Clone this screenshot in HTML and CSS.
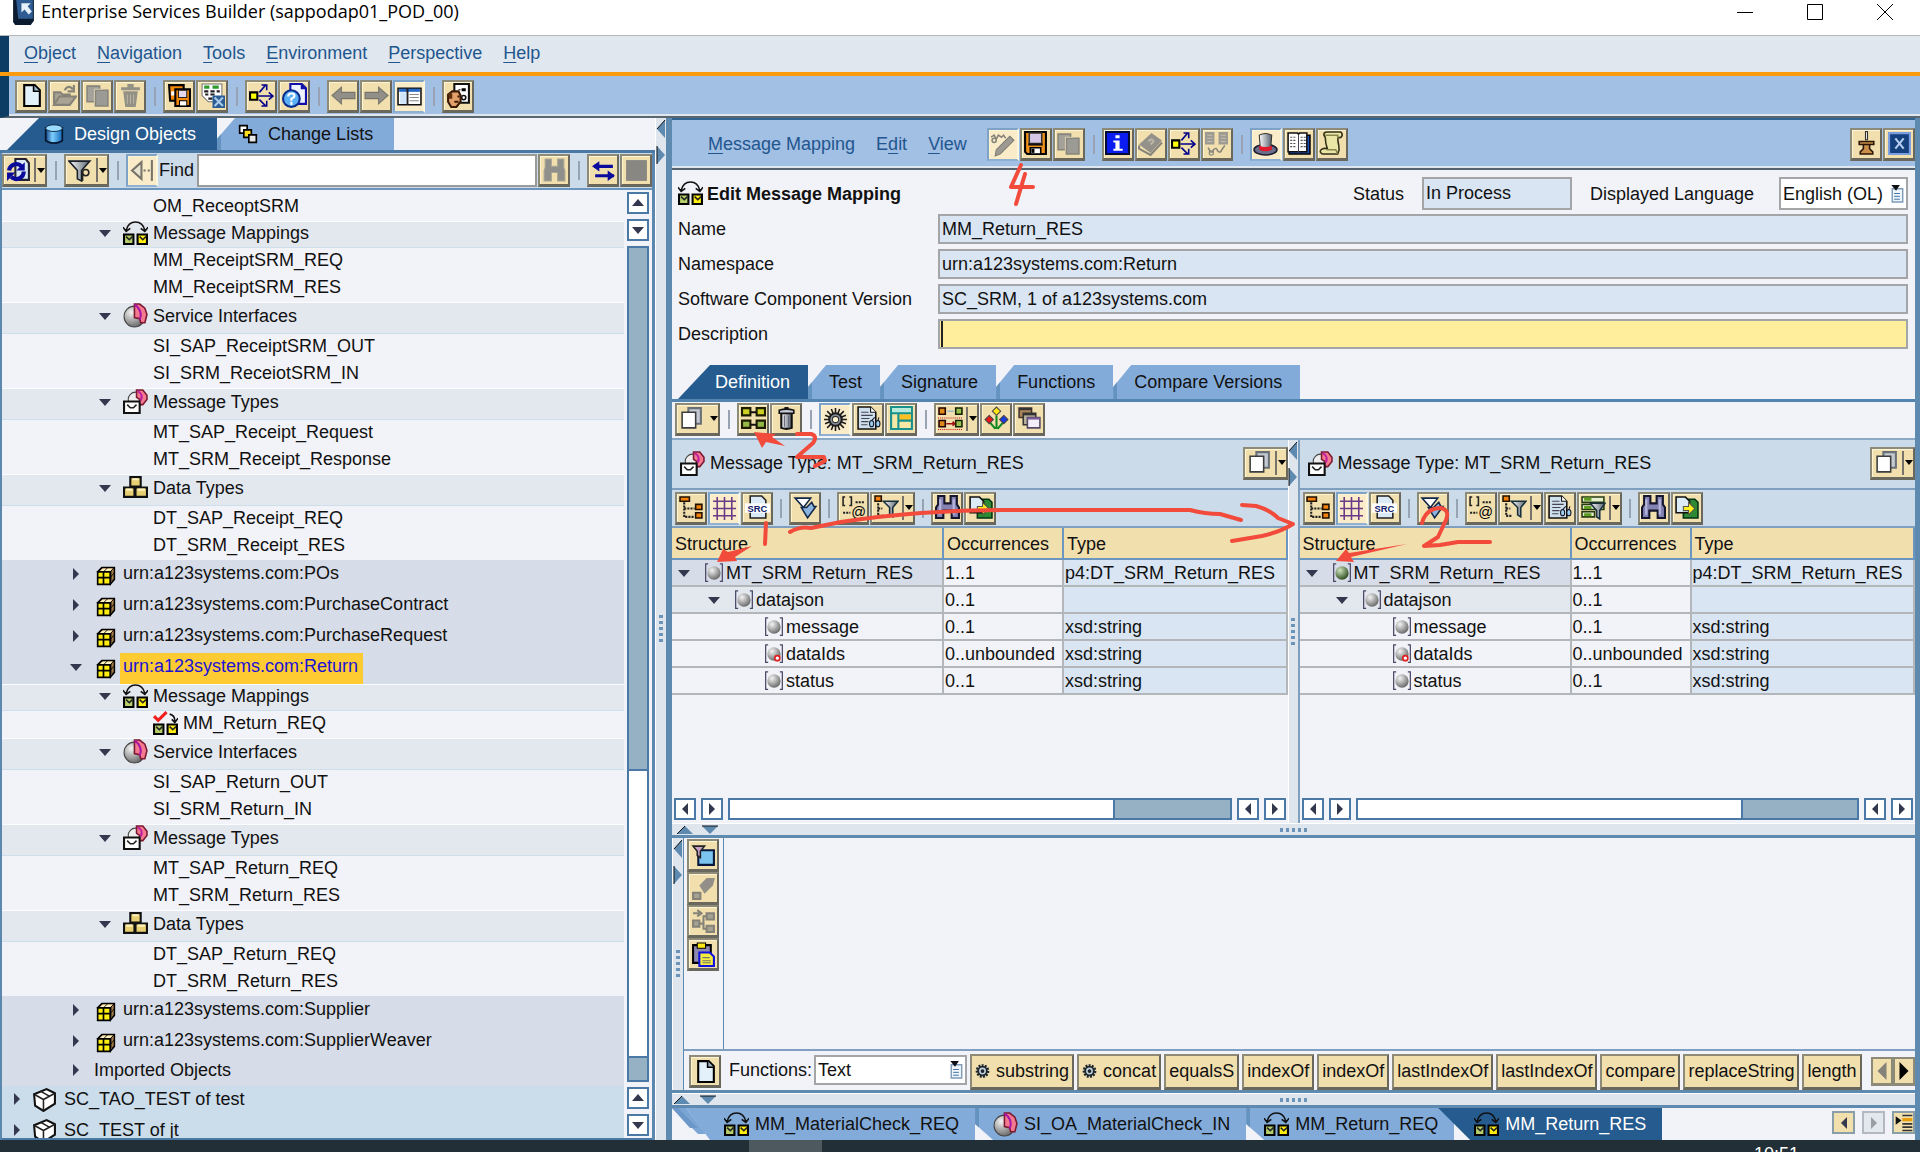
FILE: index.html
```html
<!DOCTYPE html>
<html lang="en">
<head>
    <meta charset="UTF-8">
    <meta name="viewport" content="width=device-width, initial-scale=1.0">
    <title>Enterprise Services Builder</title>
    <link rel="stylesheet" href="styles.css">
</head>
<body>
    <!-- Icon sprite -->
    <svg class="sprite" aria-hidden="true">
        <defs>
            <radialGradient id="ball" cx="35%" cy="30%" r="75%"><stop offset="0" stop-color="#f4f4f4"/><stop offset="1" stop-color="#666"/></radialGradient>
            <radialGradient id="ball-green" cx="35%" cy="30%" r="75%"><stop offset="0" stop-color="#cfe3bd"/><stop offset="1" stop-color="#2c4a1e"/></radialGradient>
            <linearGradient id="tube"><stop offset="0" stop-color="#123e86"/><stop offset=".4" stop-color="#7cd0ff"/><stop offset="1" stop-color="#1468b8"/></linearGradient>
            <linearGradient id="metal"><stop offset="0" stop-color="#fff"/><stop offset="1" stop-color="#55606c"/></linearGradient>
        </defs>
        <symbol id="i-app" viewBox="0 0 24 24"><path d="M2 0h20v20l-3 4H4l-2-3z" fill="#0c1c30"/><path d="M5 0h16v18H7z" fill="#2e5b91"/><path d="M10 3h9l-3 3 4 5-3 3-4-5-3 3z" fill="#e6f0fb"/></symbol>
        <symbol id="i-new" viewBox="0 0 24 24"><path d="M5 2h10l5 5v15H5z" fill="#e2f1fa" stroke="#000" stroke-width="2"/><path d="M14 2v6h6" fill="#9bb6c6" stroke="#000" stroke-width="1.5"/></symbol>
        <symbol id="i-open" viewBox="0 0 24 24"><path d="M2 21V9h6l2 2h7v3M2 21l5-8h16l-6 8z" fill="#a9a393" stroke="#858278" stroke-width="2"/><path d="M12 7q4-6 8-1M21 2v6h-6" fill="none" stroke="#858278" stroke-width="2"/></symbol>
        <symbol id="i-copy" viewBox="0 0 24 24"><path d="M2 3h12v15H2z" fill="#a3a19a" stroke="#86847b" stroke-width="1.5"/><path d="M10 7h12v15H10z" fill="#9c9a94" stroke="#86847b" stroke-width="1.5"/><path d="M9 19V6h8" fill="none" stroke="#d6cdb0"/></symbol>
        <symbol id="i-trash-off" viewBox="0 0 24 24"><path d="M3 4h18v3H3zM9 1h6v3H9zM5 8h14l-2 15H7z" fill="#939185"/><path d="M9 11v9M12 11v9M15 11v9" stroke="#b8b4a2"/></symbol>
        <symbol id="i-trash" viewBox="0 0 24 24"><path d="M7 7h10v14q-5 2-10 0z" fill="url(#metal)" stroke="#111" stroke-width="2"/><path d="M5 4q7-2 14 0v3H5z" fill="#c9cdda" stroke="#111" stroke-width="1.5"/><path d="M10 2h4" stroke="#111" stroke-width="2"/><path d="M10 9v11M14 9v11" stroke="#667" stroke-width="1"/></symbol>
        <symbol id="i-save" viewBox="0 0 24 24"><path d="M2 1h20v21H4l-2-2z" fill="#f0921a" stroke="#000" stroke-width="2"/><path d="M6 2h12v10H6z" fill="#d6c6e6" stroke="#333" stroke-width="1.5"/><path d="M5 12h14v2H5z" fill="#111"/><path d="M7 16h10v6H7z" fill="#fff" stroke="#000" stroke-width="1.5"/><path d="M8 17h3v4H8z"/></symbol>
        <symbol id="i-saveall" viewBox="0 0 24 24"><path d="M2 2h14v15H3z" fill="#f58a0a" stroke="#000" stroke-width="2"/><path d="M4 8h10v4H4z" fill="#fff"/><path d="M8 6h14v16H8z" fill="#f58a0a" stroke="#000" stroke-width="2"/><path d="M11 7h8v7h-8z" fill="#e6d6ee" stroke="#222"/><path d="M12 17h7v5h-7z" fill="#fff" stroke="#000"/></symbol>
        <symbol id="i-sheetx" viewBox="0 0 24 24"><path d="M2 1h19v17H8l-6-6z" fill="#fff" stroke="#777"/><path d="M4 4h5M12 4h6" stroke="#2c9c2c" stroke-width="3"/><path d="M4 8h4m2 0h4m2 0h3M5 11h3m2 0h4M8 15h4" stroke="#222" stroke-width="2"/><path d="M12 12h12v12H12z" fill="#2b5c94"/><path d="M14 14l8 8M22 14l-8 8" stroke="#a9cbe8" stroke-width="2"/></symbol>
        <symbol id="i-flow" viewBox="0 0 24 24"><path d="M1 9h7v7H1z" fill="#ff0" stroke="#000" stroke-width="2"/><path d="M9 12.500h13M19 9l4 3.500-4 3.500M10 9l6-7M12 2h5v5M10 16l6 6M12 22h5v-5" fill="none" stroke="#00008c" stroke-width="1.500"/></symbol>
        <symbol id="i-helpdoc" viewBox="0 0 24 24"><path d="M8 1h11l4 4v15H8z" fill="#eef3ff" stroke="#1111a8" stroke-width="2"/><path d="M18 1v5h5z" fill="#1111a8"/><circle cx="9" cy="15" r="8" fill="#5bb0f5" stroke="#0a2b8c" stroke-width="2"/><path d="M6 13q0-3 3-3t3 2q0 2-3 3v2M9 18v3" fill="none" stroke="#fff" stroke-width="2"/></symbol>
        <symbol id="i-back" viewBox="0 0 24 24"><path d="M1 12l9-8v5h13v6H10v5z" fill="#918f87" stroke="#76746c"/></symbol>
        <symbol id="i-fwd" viewBox="0 0 24 24"><path d="M23 12l-9-8v5H1v6h13v5z" fill="#918f87" stroke="#76746c"/></symbol>
        <symbol id="i-panel" viewBox="0 0 24 24"><path d="M1 4h22v16H1z" fill="#fff" stroke="#111" stroke-width="1.500"/><path d="M2 6h20" stroke="#2468c4" stroke-width="3"/><path d="M10 4v16" stroke="#222" stroke-width="2"/><path d="M3 8h6v11H3z" fill="#cfe6fa"/><path d="M12 10h9M12 13h9M12 16h9" stroke="#888"/></symbol>
        <symbol id="i-face" viewBox="0 0 24 24"><path d="M8 1h14v18H8z" fill="#fff" stroke="#111" stroke-width="2"/><path d="M15 5h4v3h-4zM12 6h2v1h-2z"/><circle cx="17" cy="14" r="2" fill="none" stroke="#111" stroke-width="1.500"/><path d="M2 11l4-3h6l2 4v6l-4 5H5l-3-5z" fill="#e2a06a" stroke="#3a1a06" stroke-width="2"/><path d="M2 10h4v5H3z" fill="#5c300f"/><path d="M11 13h2M8 18h4" stroke="#3a1a06" stroke-width="2"/></symbol>
        <symbol id="i-db" viewBox="0 0 24 24"><path d="M2 5v15q10 6 20 0V5z" fill="url(#tube)" stroke="#04162e" stroke-width="2"/><ellipse cx="12" cy="5" rx="10" ry="4" fill="#9adcff" stroke="#04162e"/></symbol>
        <symbol id="i-lists" viewBox="0 0 24 24"><path d="M2 2h9v9H2z" fill="#fff" stroke="#000" stroke-width="2"/><path d="M7 7h9v9H7z" fill="#ffdf20" stroke="#000" stroke-width="2"/><path d="M13 13h9v9h-9z" fill="#e7e7e7" stroke="#000" stroke-width="2"/></symbol>
        <symbol id="i-refresh" viewBox="0 0 24 24"><path d="M9 1h10l3 4v16H9z" fill="#dbe9f5" stroke="#223" stroke-width="2"/><path d="M3 12a7 7 0 0 1 12-4M17 13a7 7 0 0 1-12 5" fill="none" stroke="#0a0a9c" stroke-width="4"/><path d="M18 4v8h-8zM1 22v-8h8z" fill="#0a0a9c"/></symbol>
        <symbol id="i-filter" viewBox="0 0 24 24"><path d="M1 3h20l-8 9v10l-4-2v-8z" fill="url(#metal)" stroke="#18202c" stroke-width="1.500"/><circle cx="17" cy="14" r="3" fill="none" stroke="#222" stroke-width="1.500"/><path d="M14 14v8" stroke="#222" stroke-width="1.500"/></symbol>
        <symbol id="i-collapse" viewBox="0 0 24 24"><path d="M11 4v16L2 12z" fill="#e8e3d0" stroke="#77746a" stroke-width="2"/><path d="M21 2v20" stroke="#77746a" stroke-width="2"/><path d="M13 12h6" stroke="#77746a" stroke-width="2" stroke-dasharray="2 2"/></symbol>
        <symbol id="i-binoc-off" viewBox="0 0 24 24"><path d="M3 1h6v7h6V1h6v8l1 3v10h-7v-8H9v8H2V12l1-3z" fill="#8f8f8b" stroke="#aaa693"/></symbol>
        <symbol id="i-binoc" viewBox="0 0 24 24"><path d="M3 1h6v7h6V1h6v8l2 3v10h-7v-7H8v7H1V12l2-3z" fill="#8583b4" stroke="#15152c" stroke-width="2"/><path d="M5 4v15M18 4v15" stroke="#b6b6dc" stroke-width="2"/></symbol>
        <symbol id="i-swap" viewBox="0 0 24 24"><path d="M3 8h18M4 17h18" stroke="#0a0a9c" stroke-width="3"/><path d="M1 8l7-5v10zM23 17l-7-5v10z" fill="#0a0a9c"/></symbol>
        <symbol id="i-stop" viewBox="0 0 24 24"><path d="M2 2h20v20H2z" fill="#888782"/></symbol>
        <symbol id="i-map" viewBox="0 0 24 24"><path d="M3 9Q5 1 12 1t9 8M0 6l3 4 4-3M24 6l-3 4-4-3" fill="none" stroke="#111" stroke-width="1.5"/><path d="M1 13h9v9H1z" fill="#b6cf6a" stroke="#000" stroke-width="2"/><path d="M14 13h9v9h-9z" fill="#ffee10" stroke="#000" stroke-width="2"/><path d="M3 15l3 3 3-3M16 15l3 3 3-3" fill="none" stroke="#222" stroke-width="1.5"/></symbol>
        <symbol id="i-mapchk" viewBox="0 0 24 24"><path d="M16 3q5 1 5 7M24 7l-3 4-3-3" fill="none" stroke="#111" stroke-width="1.5"/><path d="M1 13h9v9H1z" fill="#b6cf6a" stroke="#000" stroke-width="2"/><path d="M14 13h9v9h-9z" fill="#ffee10" stroke="#000" stroke-width="2"/><path d="M3 15l3 3 3-3M16 15l3 3 3-3" fill="none" stroke="#222" stroke-width="1.5"/><path d="M1 5l4 4 8-8" fill="none" stroke="#f02020" stroke-width="3"/></symbol>
        <symbol id="i-iface" viewBox="0 0 24 24"><ellipse cx="11" cy="13" rx="10" ry="10" fill="url(#ball)" stroke="#444"/><path d="M11 1h5l5 4 2 6-2 8h-4l-1-4-5-1z" fill="#f47a90" stroke="#7c1830" stroke-width="1.5"/><path d="M11 2q3 1 5 5t0 9" fill="none" stroke="#a818a8" stroke-width="2"/></symbol>
        <symbol id="i-mtype" viewBox="0 0 24 24"><circle cx="12" cy="10" r="7" fill="#eee" stroke="#444"/><path d="M13 1h6l4 5v4l-4 5h-4l1-5-3-2z" fill="#f47a90" stroke="#7c1830" stroke-width="1.5"/><path d="M14 2q6 3 3 9" fill="none" stroke="#c020a0" stroke-width="2"/><path d="M1 12h15v11H1z" fill="#fff" stroke="#111" stroke-width="2"/><path d="M4 15l3 3h3l3-3" fill="none" stroke="#222" stroke-width="1.5"/></symbol>
        <symbol id="i-dtype" viewBox="0 0 24 24"><path d="M7 2h10v9H7zM1 12h10v9H1zM12 12h11v9H12z" fill="#e8cf72" stroke="#111" stroke-width="2"/><path d="M9 4h6M3 14h6M14 14h7" stroke="#fff3bd" stroke-width="2"/></symbol>
        <symbol id="i-ns" viewBox="0 0 24 24"><path d="M2 7l5-5h15v14l-5 6z" fill="#e0a860" stroke="#000" stroke-width="2"/><path d="M5 6l3-3h12l-3 3z" fill="#fff3c0"/><path d="M2 7h15v15H2z" fill="#ffed10" stroke="#000" stroke-width="2"/><path d="M2 14h15M9 7v15" stroke="#000" stroke-width="2"/><path d="M17 7l5-5M19 5v13M17 14l5-6M14 2L9 7" stroke="#000"/></symbol>
        <symbol id="i-sc" viewBox="0 0 24 24"><path d="M2 7l12-5 8 4v10l-11 7-8-5z" fill="#fff" stroke="#111" stroke-width="2"/><path d="M2 7l9 5v11M11 12l11-6M8 4l9 5" fill="none" stroke="#222" stroke-width="1.5"/></symbol>
        <symbol id="i-pencil" viewBox="0 0 24 24"><path d="M1 5l3-2 2 4 2-4 3 2 2-2 2 3" fill="none" stroke="#86847b" stroke-width="1.500"/><circle cx="4" cy="8" r="2" fill="none" stroke="#86847b" stroke-width="1.500"/><path d="M19 4l4 4-13 13-5 2 1-6z" fill="#9c9a92" stroke="#7c7a72"/></symbol>
        <symbol id="i-info" viewBox="0 0 24 24"><path d="M1 1h22v21H1z" fill="#0a1cf0" stroke="#000b38" stroke-width="2"/><path d="M10 4h4v3h-4zM8 9h6v8h3v2H8v-2h2v-6H8z" fill="#fff"/></symbol>
        <symbol id="i-book-off" viewBox="0 0 24 24"><path d="M1 13L13 2l10 7-11 12z" fill="#93918a"/><path d="M1 14v3l11 6 11-12" fill="none" stroke="#86847b" stroke-width="2"/><path d="M10 10q3-4 5 0l-3 3" fill="none" stroke="#b9b5a6" stroke-width="2"/></symbol>
        <symbol id="i-where-off" viewBox="0 0 24 24"><path d="M1 1h9v12H1zM14 1h9v12h-9z" fill="#9c9a92"/><path d="M3 4h5M3 7h5M3 10h5M16 4h5M16 7h5M16 10h5" stroke="#c4bfae"/><path d="M4 16l2 4q3 1 3-2 3-3 4 1 3 3 4-1l3-4" fill="none" stroke="#86847b" stroke-width="1.500"/><circle cx="7" cy="21" r="2" fill="none" stroke="#86847b"/></symbol>
        <symbol id="i-hat" viewBox="0 0 24 24"><ellipse cx="12" cy="17" rx="11" ry="5" fill="#6a6f8c" stroke="#1c1c2c" stroke-width="1.5"/><path d="M6 3q6-3 12 0l-1 12q-5 3-10 0z" fill="url(#metal)" stroke="#333"/><path d="M6 13q6 3 12 0v4q-6 3-12 0z" fill="#e01a2c"/></symbol>
        <symbol id="i-book" viewBox="0 0 24 24"><path d="M3 4h20v18H3z" fill="#1a4fb8" stroke="#000" stroke-width="1.500"/><path d="M2 2h9l1 1 1-1h7v18H2z" fill="#fff" stroke="#111" stroke-width="1.500"/><path d="M12 3v18" stroke="#445"/><path d="M4 6h6M4 9h6M4 12h6M4 15h6M14 6h5M14 9h5M14 12h5M14 15h5" stroke="#555" stroke-dasharray="2 1"/></symbol>
        <symbol id="i-scroll" viewBox="0 0 24 24"><path d="M5 2q1-1 3-1h13q2 2 1 4t-4 1q0 4 1 8t-1 8H3q-3-2-1-4t6-1Q6 11 6 6 4 4 5 2z" fill="#eae6a6" stroke="#333018" stroke-width="1.500"/><path d="M6 4h12v3M7 18h9q2 2 1 4" fill="none" stroke="#8a8650" stroke-width="1.5"/></symbol>
        <symbol id="i-pin" viewBox="0 0 24 24"><path d="M12 0v9" stroke="#333" stroke-width="3"/><path d="M12 1v7" stroke="#ddd"/><path d="M5 10h14v3H5zM9 13h6v4l3 3v2H6v-2l3-3z" fill="#c98f4a" stroke="#2a1606" stroke-width="1.5"/></symbol>
        <symbol id="i-x" viewBox="0 0 24 24"><path d="M2 2h20v20H2z" fill="#14407e" stroke="#7c9ce0" stroke-width="2"/><path d="M8 7l8 10M16 7L8 17" stroke="#b4cdee" stroke-width="2"/></symbol>
        <symbol id="i-windows" viewBox="0 0 24 24"><path d="M9 2h12v15H9z" fill="#c3cad2" stroke="#6a7078" stroke-width="2"/><path d="M3 6h13v15H3z" fill="#fff" stroke="#3c3c3c" stroke-width="1.5"/></symbol>
        <symbol id="i-depend" viewBox="0 0 24 24"><path d="M1 2h8v7H1zM15 2h8v7h-8z" fill="#cdcf24" stroke="#1c1c00" stroke-width="2"/><path d="M1 14h8v7H1zM15 14h8v7h-8z" fill="#96b848" stroke="#1c1c00" stroke-width="2"/><path d="M9 6h6M9 18h6" stroke="#111" stroke-width="2"/></symbol>
        <symbol id="i-gear" viewBox="0 0 24 24"><path d="M12 1v22M1 12h22M4 4l16 16M20 4L4 20M8 2l8 20M16 2L8 22M2 8l20 8M22 8L2 16" stroke="#1c1c1c" stroke-width="1.5"/><circle cx="12" cy="12" r="6" fill="#8a949e" stroke="#1c1c1c" stroke-width="2"/><circle cx="12" cy="12" r="3" fill="#fdf3d0" stroke="#333"/></symbol>
        <symbol id="i-cog" viewBox="0 0 24 24"><circle cx="12" cy="12" r="9" fill="none" stroke="#1c262e" stroke-width="4" stroke-dasharray="3 2"/><circle cx="12" cy="12" r="7" fill="#c4d2da" stroke="#1c262e" stroke-width="3"/><circle cx="12" cy="12" r="3" fill="#1c262e"/></symbol>
        <symbol id="i-docview" viewBox="0 0 24 24"><path d="M2 1h12l5 5v16H2z" fill="#cfe0ec" stroke="#111" stroke-width="1.500"/><path d="M14 1v5h5" fill="#fff" stroke="#111"/><path d="M5 6h7M5 9h11M5 12h8M5 15h7M5 18h6" stroke="#445"/><ellipse cx="15" cy="17" rx="2" ry="3" fill="#9cd0f0" stroke="#112"/><ellipse cx="21" cy="17" rx="2" ry="3" fill="#9cd0f0" stroke="#112"/><path d="M15 14l3-3M21 14l1-3" fill="none" stroke="#112"/></symbol>
        <symbol id="i-layout" viewBox="0 0 24 24"><path d="M2 1h20v21H2z" fill="#f6e9a6" stroke="#18908c" stroke-width="2"/><path d="M3 2h18v5H3z" fill="#b6ecdc"/><path d="M10 8h11v6H10z" fill="#ffc020"/><path d="M2 7h20M9 7v15M9 14h13" stroke="#18908c" stroke-width="2"/></symbol>
        <symbol id="i-maprows" viewBox="0 0 24 24"><path d="M1 2h6v6H1z" fill="#e08a18" stroke="#200" stroke-width="1.500"/><path d="M17 2h6v6h-6z" fill="#9cc050" stroke="#120" stroke-width="1.500"/><path d="M1 14h6v6H1z" fill="#e08a18" stroke="#200" stroke-width="1.500"/><path d="M17 14h6v6h-6z" fill="#9cc050" stroke="#120" stroke-width="1.500"/><path d="M9 5h6" stroke="#7aa4d8"/><path d="M8 17h8M14 15l2 2-2 2" fill="none" stroke="#a01010" stroke-width="1.500"/><path d="M0 11.500h24M0 22.500h24" stroke="#d01010" stroke-dasharray="1 1"/></symbol>
        <symbol id="i-diamonds" viewBox="0 0 24 24"><path d="M12 9v13M5 15l6 7M19 15l-6 7" fill="none" stroke="#108a20" stroke-width="2"/><path d="M12 1l4 4-4 4-4-4z" fill="#ffe810" stroke="#444"/><path d="M5 9l4 4-4 4-4-4z" fill="#e81818" stroke="#444"/><path d="M19 9l4 4-4 4-4-4z" fill="#1838e0" stroke="#444"/></symbol>
        <symbol id="i-cascade" viewBox="0 0 24 24"><path d="M2 2h12v9H2z" fill="#a98458" stroke="#433" stroke-width="1.500"/><path d="M2 3h12" stroke="#333" stroke-width="2"/><path d="M6 7h12v11H6z" fill="#b7b29c" stroke="#333" stroke-width="1.500"/><path d="M6 8h12" stroke="#333" stroke-width="2"/><path d="M10 11h12v10H10z" fill="#f4eef8" stroke="#554a66" stroke-width="1.500"/><path d="M10 12h12" stroke="#7a5a9a" stroke-width="2"/></symbol>
        <symbol id="i-tree" viewBox="0 0 24 24"><path d="M5 7v14h10M5 13h10" fill="none" stroke="#222" stroke-width="2" stroke-dasharray="2 1"/><path d="M1 2h9v4H1zM16 9h6v5h-6zM16 17h6v5h-6z" fill="#f5820a" stroke="#201000" stroke-width="1.500"/></symbol>
        <symbol id="i-grid" viewBox="0 0 24 24"><path d="M5 1v22M12 1v22M19 1v22M1 5h22M1 12h22M1 19h22" stroke="#6a3a86" stroke-width="1.5"/></symbol>
        <symbol id="i-expand" viewBox="0 0 24 24"><path d="M2 3h15l-7 9z" fill="#fff" stroke="#12284a" stroke-width="1.500"/><path d="M8 12h5l5-5 2 4h2l-8 11z" fill="#8cb4e0" stroke="#12284a" stroke-width="1.500"/></symbol>
        <symbol id="i-treefilter" viewBox="0 0 24 24"><path d="M1 1h6v5H1z" fill="#f5820a" stroke="#210" stroke-width="1.500"/><path d="M4 8v12h6M4 13h4" fill="none" stroke="#222" stroke-width="2" stroke-dasharray="2 1"/><path d="M9 6h14l-5 6v9l-3-2v-7z" fill="url(#metal)" stroke="#18303c" stroke-width="1.500"/></symbol>
        <symbol id="i-fieldfilter" viewBox="0 0 24 24"><path d="M1 2h21v5H1zM1 9h21v5H1zM1 16h12v5H1z" fill="#e6f0d0" stroke="#263a10" stroke-width="1.5"/><path d="M3 4h7M3 12h7M3 19h7" stroke="#5c9c20" stroke-width="3"/><path d="M9 8h14l-5 7v8l-3-2v-6z" fill="url(#metal)" stroke="#18303c" stroke-width="1.500"/></symbol>
        <symbol id="i-export" viewBox="0 0 24 24"><path d="M12 4h8l3 3v15H9v-6z" fill="#2c8a34" stroke="#031" stroke-width="1.500"/><path d="M2 2h9l4 4v11H2z" fill="#dcecf6" stroke="#111" stroke-width="1.500"/><path d="M9 11h5V7l6 6-6 6v-4H9z" fill="#fff020" stroke="#554"/></symbol>
        <symbol id="i-node" viewBox="0 0 24 24"><path d="M5 1H2v21h3M19 1h3v21h-3" fill="none" stroke="#4a4666" stroke-width="1.500"/><circle cx="12" cy="12" r="8" fill="url(#ball)"/></symbol>
        <symbol id="i-node-green" viewBox="0 0 24 24"><path d="M5 1H2v21h3M19 1h3v21h-3" fill="none" stroke="#4a4666" stroke-width="1.500"/><circle cx="12" cy="12" r="8" fill="url(#ball-green)"/></symbol>
        <symbol id="i-node-red" viewBox="0 0 24 24"><path d="M5 1H2v21h3M19 1h3v21h-3" fill="none" stroke="#4a4666" stroke-width="1.500"/><circle cx="12" cy="12" r="8" fill="url(#ball)"/><ellipse cx="16" cy="17" rx="3" ry="3" fill="#fff" stroke="#e02020" stroke-width="2"/></symbol>
        <symbol id="i-winfilter" viewBox="0 0 24 24"><path d="M7 7h15v14H7z" fill="#7cc4f0" stroke="#08183c" stroke-width="2"/><path d="M2 3h11l-4 5v6l-3-2V8z" fill="#c8a0c8" stroke="#222" stroke-width="1.5"/></symbol>
        <symbol id="i-erase" viewBox="0 0 24 24"><path d="M2 16h7v6H2z" fill="#a5a294" stroke="#858278" stroke-width="2"/><path d="M8 9l7-7h8l-2 7-8 8z" fill="#918f87"/></symbol>
        <symbol id="i-insert" viewBox="0 0 24 24"><path d="M2 11h6v6H2zM15 4h7v6h-7zM15 16h7v6h-7z" fill="#a5a294" stroke="#858278" stroke-width="2"/><path d="M8 14h4M15 7h-3v12h3M2 4h7M6 1l4 3-4 3" fill="none" stroke="#858278" stroke-width="2"/></symbol>
        <symbol id="i-paste" viewBox="0 0 24 24"><path d="M2 3h17v17H2z" fill="#8c88b0" stroke="#000" stroke-width="2"/><path d="M6 1h8v5H6z" fill="#ffe810" stroke="#000"/><path d="M8 10h10l4 4v9H8z" fill="#f4ec40" stroke="#1010e0" stroke-width="2"/><path d="M11 15h7M11 18h8M11 20h8" stroke="#776"/></symbol>
        <symbol id="i-list" viewBox="0 0 14 20"><path d="M2 5h11v14H2z" fill="#eef5fc" stroke="#7f9cb8" stroke-width="1.500"/><path d="M4 10h6M4 13h6M4 16h6" stroke="#3a6ea0"/><path d="M1 1h9L6 7z" fill="#0c1014"/></symbol>
        <symbol id="i-menu" viewBox="0 0 24 24"><path d="M2 4l7 5-7 5z" fill="#111"/><path d="M10 3h12M10 13h12M10 17h12M10 21h12" stroke="#333" stroke-width="2"/><path d="M10 8h12" stroke="#e8a010" stroke-width="4"/></symbol>
        <symbol id="i-left" viewBox="0 0 12 12"><path d="M9 0v12L3 6z" fill="currentColor"/></symbol>
        <symbol id="i-right" viewBox="0 0 12 12"><path d="M3 0v12l6-6z" fill="currentColor"/></symbol>
        <symbol id="i-up" viewBox="0 0 12 12"><path d="M0 9h12L6 2z" fill="currentColor"/></symbol>
        <symbol id="i-down" viewBox="0 0 12 12"><path d="M0 3h12l-6 7z" fill="currentColor"/></symbol>
    </svg>

    <div class="titlebar">
        <svg class="icon"><use href="#i-app"/></svg>
        <span class="titlebar-text">Enterprise Services Builder (sappodap01_POD_00)</span>
        <button class="win-btn" aria-label="Minimize"><svg viewBox="0 0 16 16"><path d="M0 8.5h16"/></svg></button>
        <button class="win-btn" aria-label="Maximize"><svg viewBox="0 0 16 16"><path d="M.5.5h15v15H.5z"/></svg></button>
        <button class="win-btn" aria-label="Close"><svg viewBox="0 0 16 16"><path d="M0 0l16 16M16 0L0 16"/></svg></button>
    </div>

    <nav class="menubar">
        <a href="#"><u>O</u>bject</a>
        <a href="#"><u>N</u>avigation</a>
        <a href="#"><u>T</u>ools</a>
        <a href="#"><u>E</u>nvironment</a>
        <a href="#"><u>P</u>erspective</a>
        <a href="#"><u>H</u>elp</a>
    </nav>

    <div class="toolbar main-toolbar">
        <button class="tool" aria-label="New"><svg class="icon"><use href="#i-new"/></svg></button>
        <button class="tool" aria-label="Open"><svg class="icon"><use href="#i-open"/></svg></button>
        <button class="tool" aria-label="Copy"><svg class="icon"><use href="#i-copy"/></svg></button>
        <button class="tool" aria-label="Delete"><svg class="icon"><use href="#i-trash-off"/></svg></button>
        <span class="sep"></span>
        <button class="tool" aria-label="Save all"><svg class="icon"><use href="#i-saveall"/></svg></button>
        <button class="tool" aria-label="Discard"><svg class="icon"><use href="#i-sheetx"/></svg></button>
        <span class="sep"></span>
        <button class="tool" aria-label="Where used"><svg class="icon"><use href="#i-flow"/></svg></button>
        <button class="tool" aria-label="Help"><svg class="icon"><use href="#i-helpdoc"/></svg></button>
        <span class="sep"></span>
        <button class="tool" aria-label="Back"><svg class="icon"><use href="#i-back"/></svg></button>
        <button class="tool" aria-label="Forward"><svg class="icon"><use href="#i-fwd"/></svg></button>
        <button class="tool pressed" aria-label="Navigation area"><svg class="icon"><use href="#i-panel"/></svg></button>
        <span class="sep"></span>
        <button class="tool" aria-label="User settings"><svg class="icon"><use href="#i-face"/></svg></button>
    </div>

    <div class="workspace">
        <aside class="sidebar">
            <div class="tabs side-tabs">
                <button class="tab active"><svg class="icon small"><use href="#i-db"/></svg>Design Objects</button>
                <button class="tab"><svg class="icon small"><use href="#i-lists"/></svg>Change Lists</button>
            </div>
            <div class="toolbar side-toolbar">
                <button class="tool drop" aria-label="Refresh"><svg class="icon"><use href="#i-refresh"/></svg></button>
                <span class="sep"></span>
                <button class="tool drop" aria-label="Filter"><svg class="icon"><use href="#i-filter"/></svg></button>
                <span class="sep"></span>
                <button class="tool pressed" aria-label="Collapse"><svg class="icon"><use href="#i-collapse"/></svg></button>
                <label for="find">Find</label>
                <input type="text" id="find" class="find">
                <button class="tool" aria-label="Search"><svg class="icon"><use href="#i-binoc-off"/></svg></button>
                <span class="sep"></span>
                <button class="tool" aria-label="Synchronize"><svg class="icon"><use href="#i-swap"/></svg></button>
                <button class="tool" aria-label="Stop"><svg class="icon"><use href="#i-stop"/></svg></button>
            </div>
            <div class="tree-box">
                <ul class="tree">
                    <li class="leaf">OM_ReceoptSRM</li>
                    <li class="group short"><svg class="arrow"><use href="#i-down"/></svg><svg class="icon"><use href="#i-map"/></svg>Message Mappings</li>
                    <li class="leaf">MM_ReceiptSRM_REQ</li>
                    <li class="leaf">MM_ReceiptSRM_RES</li>
                    <li class="group"><svg class="arrow"><use href="#i-down"/></svg><svg class="icon"><use href="#i-iface"/></svg>Service Interfaces</li>
                    <li class="leaf">SI_SAP_ReceiptSRM_OUT</li>
                    <li class="leaf">SI_SRM_ReceiotSRM_IN</li>
                    <li class="group"><svg class="arrow"><use href="#i-down"/></svg><svg class="icon"><use href="#i-mtype"/></svg>Message Types</li>
                    <li class="leaf">MT_SAP_Receipt_Request</li>
                    <li class="leaf">MT_SRM_Receipt_Response</li>
                    <li class="group"><svg class="arrow"><use href="#i-down"/></svg><svg class="icon"><use href="#i-dtype"/></svg>Data Types</li>
                    <li class="leaf">DT_SAP_Receipt_REQ</li>
                    <li class="leaf">DT_SRM_Receipt_RES</li>
                    <li class="ns"><svg class="arrow"><use href="#i-right"/></svg><svg class="icon small"><use href="#i-ns"/></svg><span>urn:a123systems.com:POs</span></li>
                    <li class="ns"><svg class="arrow"><use href="#i-right"/></svg><svg class="icon small"><use href="#i-ns"/></svg><span>urn:a123systems.com:PurchaseContract</span></li>
                    <li class="ns"><svg class="arrow"><use href="#i-right"/></svg><svg class="icon small"><use href="#i-ns"/></svg><span>urn:a123systems.com:PurchaseRequest</span></li>
                    <li class="ns"><svg class="arrow"><use href="#i-down"/></svg><svg class="icon small"><use href="#i-ns"/></svg><span class="selected">urn:a123systems.com:Return</span></li>
                    <li class="group short"><svg class="arrow"><use href="#i-down"/></svg><svg class="icon"><use href="#i-map"/></svg>Message Mappings</li>
                    <li class="leaf"><svg class="icon"><use href="#i-mapchk"/></svg>MM_Return_REQ</li>
                    <li class="group"><svg class="arrow"><use href="#i-down"/></svg><svg class="icon"><use href="#i-iface"/></svg>Service Interfaces</li>
                    <li class="leaf">SI_SAP_Return_OUT</li>
                    <li class="leaf">SI_SRM_Return_IN</li>
                    <li class="group"><svg class="arrow"><use href="#i-down"/></svg><svg class="icon"><use href="#i-mtype"/></svg>Message Types</li>
                    <li class="leaf">MT_SAP_Return_REQ</li>
                    <li class="leaf">MT_SRM_Return_RES</li>
                    <li class="group"><svg class="arrow"><use href="#i-down"/></svg><svg class="icon"><use href="#i-dtype"/></svg>Data Types</li>
                    <li class="leaf">DT_SAP_Return_REQ</li>
                    <li class="leaf">DT_SRM_Return_RES</li>
                    <li class="ns"><svg class="arrow"><use href="#i-right"/></svg><svg class="icon small"><use href="#i-ns"/></svg><span>urn:a123systems.com:Supplier</span></li>
                    <li class="ns"><svg class="arrow"><use href="#i-right"/></svg><svg class="icon small"><use href="#i-ns"/></svg><span>urn:a123systems.com:SupplierWeaver</span></li>
                    <li class="ns short"><svg class="arrow"><use href="#i-right"/></svg>Imported Objects</li>
                    <li class="sc"><svg class="arrow"><use href="#i-right"/></svg><svg class="icon"><use href="#i-sc"/></svg>SC_TAO_TEST of test</li>
                    <li class="sc"><svg class="arrow"><use href="#i-right"/></svg><svg class="icon"><use href="#i-sc"/></svg>SC_TEST of jt</li>
                </ul>
                <div class="vscroll">
                    <button class="scroll-btn" aria-label="Scroll up"><svg class="arrow"><use href="#i-up"/></svg></button>
                    <button class="scroll-btn" aria-label="Scroll down"><svg class="arrow"><use href="#i-down"/></svg></button>
                    <div class="track"><div class="track-before"></div><div class="thumb"></div><div class="track-after"></div></div>
                    <button class="scroll-btn" aria-label="Scroll up"><svg class="arrow"><use href="#i-up"/></svg></button>
                    <button class="scroll-btn" aria-label="Scroll down"><svg class="arrow"><use href="#i-down"/></svg></button>
                </div>
            </div>
        </aside>

        <div class="vsplit">
            <svg class="split-arrows" viewBox="0 0 10 46"><path d="M9 2v18L1 11z" fill="#5f8ab0"/><path d="M9 2L1 11" stroke="#111"/><path d="M1 28v18l8-9z" fill="#5f8ab0"/><path d="M1 28v18" stroke="#111"/></svg>
            <span class="dots"></span>
        </div>

        <main class="editor">
            <div class="editor-head">
                <nav class="editor-menu">
                    <a href="#"><u>M</u>essage Mapping</a>
                    <a href="#">E<u>d</u>it</a>
                    <a href="#"><u>V</u>iew</a>
                </nav>
                <div class="toolbar">
                    <button class="tool pressed" aria-label="Display or change"><svg class="icon"><use href="#i-pencil"/></svg></button>
                    <button class="tool" aria-label="Save"><svg class="icon"><use href="#i-save"/></svg></button>
                    <button class="tool" aria-label="Copy"><svg class="icon"><use href="#i-copy"/></svg></button>
                    <span class="sep"></span>
                    <button class="tool" aria-label="Information"><svg class="icon"><use href="#i-info"/></svg></button>
                    <button class="tool" aria-label="Documentation"><svg class="icon"><use href="#i-book-off"/></svg></button>
                    <button class="tool" aria-label="Where used"><svg class="icon"><use href="#i-flow"/></svg></button>
                    <button class="tool" aria-label="Compare"><svg class="icon"><use href="#i-where-off"/></svg></button>
                    <span class="sep"></span>
                    <button class="tool pressed" aria-label="Header"><svg class="icon"><use href="#i-hat"/></svg></button>
                    <button class="tool" aria-label="Book"><svg class="icon"><use href="#i-book"/></svg></button>
                    <button class="tool" aria-label="History"><svg class="icon"><use href="#i-scroll"/></svg></button>
                </div>
                <div class="toolbar head-right">
                    <button class="tool" aria-label="Pin"><svg class="icon"><use href="#i-pin"/></svg></button>
                    <button class="tool" aria-label="Close editor"><svg class="icon"><use href="#i-x"/></svg></button>
                </div>
            </div>

            <form class="object-form">
                <div class="form-title">
                    <svg class="icon"><use href="#i-map"/></svg>
                    <h1>Edit Message Mapping</h1>
                    <label for="status">Status</label>
                    <input type="text" id="status" class="field status" value="In Process" readonly>
                    <label for="language" class="language-label">Displayed Language</label>
                    <span class="select-box language">
                        <select id="language"><option>English (OL)</option></select>
                        <svg class="list-icon"><use href="#i-list"/></svg>
                    </span>
                </div>
                <div class="form-grid">
                    <label for="name">Name</label>
                    <input type="text" id="name" class="field" value="MM_Return_RES" readonly>
                    <label for="namespace">Namespace</label>
                    <input type="text" id="namespace" class="field" value="urn:a123systems.com:Return" readonly>
                    <label for="scv">Software Component Version</label>
                    <input type="text" id="scv" class="field" value="SC_SRM, 1 of a123systems.com" readonly>
                    <label for="description">Description</label>
                    <input type="text" id="description" class="field editing">
                </div>
            </form>

            <div class="tabs editor-tabs">
                <button class="tab active">Definition</button>
                <button class="tab">Test</button>
                <button class="tab">Signature</button>
                <button class="tab">Functions</button>
                <button class="tab">Compare Versions</button>
            </div>
            <div class="toolbar definition-toolbar">
                <button class="tool drop plain" aria-label="Window"><svg class="icon"><use href="#i-windows"/></svg></button>
                <span class="sep"></span>
                <button class="tool" aria-label="Map selected fields"><svg class="icon"><use href="#i-depend"/></svg></button>
                <button class="tool" aria-label="Delete"><svg class="icon"><use href="#i-trash"/></svg></button>
                <span class="sep"></span>
                <button class="tool pressed" aria-label="Settings"><svg class="icon"><use href="#i-gear"/></svg></button>
                <button class="tool" aria-label="Text preview"><svg class="icon"><use href="#i-docview"/></svg></button>
                <button class="tool" aria-label="Data flow layout"><svg class="icon"><use href="#i-layout"/></svg></button>
                <span class="sep"></span>
                <button class="tool drop" aria-label="Mapping rows"><svg class="icon"><use href="#i-maprows"/></svg></button>
                <button class="tool" aria-label="Dependencies"><svg class="icon"><use href="#i-diamonds"/></svg></button>
                <button class="tool" aria-label="Cascade"><svg class="icon"><use href="#i-cascade"/></svg></button>
            </div>

            <div class="panes">
                <section class="pane">
                    <div class="pane-head">
                        <svg class="icon"><use href="#i-mtype"/></svg>
                        <span>Message Type: MT_SRM_Return_RES</span>
                        <button class="tool drop" aria-label="Window"><svg class="icon"><use href="#i-windows"/></svg></button>
                    </div>
                    <div class="toolbar pane-toolbar">
                        <button class="tool" aria-label="Tree"><svg class="icon"><use href="#i-tree"/></svg></button>
                        <button class="tool pressed" aria-label="Table"><svg class="icon"><use href="#i-grid"/></svg></button>
                        <button class="tool" aria-label="Source"><svg class="icon" viewBox="0 0 24 24"><path d="M5 1h11l4 4v17H5z" fill="#dceaf5" stroke="#222" stroke-width="1.500"/><path d="M0 8h24v9H0z" fill="#fff"/><text x="12" y="16" text-anchor="middle" class="icon-text">SRC</text></svg></button>
                        <span class="sep"></span>
                        <button class="tool" aria-label="Expand all"><svg class="icon"><use href="#i-expand"/></svg></button>
                        <span class="sep"></span>
                        <button class="tool" aria-label="Attributes"><svg class="icon" viewBox="0 0 24 24"><path d="M4 2H2v8h2M8 2h2v8H8" fill="none" stroke="#222" stroke-width="1.5"/><path d="M14 7h8M2 17h7" stroke="#222" stroke-width="2" stroke-dasharray="2 1"/><text x="17" y="21" text-anchor="middle" class="icon-at">@</text></svg></button>
                        <button class="tool drop" aria-label="Filter tree"><svg class="icon"><use href="#i-treefilter"/></svg></button>
                        <span class="sep"></span>
                        <button class="tool" aria-label="Find"><svg class="icon"><use href="#i-binoc"/></svg></button>
                        <button class="tool" aria-label="Export"><svg class="icon"><use href="#i-export"/></svg></button>
                    </div>
                    <div class="table-box">
                        <table class="structure">
                            <colgroup><col class="col-structure"><col class="col-occurs"><col></colgroup>
                            <thead>
                                <tr><th>Structure</th><th>Occurrences</th><th>Type</th></tr>
                            </thead>
                            <tbody>
                                <tr class="root"><td><span class="node"><svg class="arrow"><use href="#i-down"/></svg><svg class="icon small"><use href="#i-node"/></svg>MT_SRM_Return_RES</span></td><td>1..1</td><td>p4:DT_SRM_Return_RES</td></tr>
                                <tr class="branch"><td><span class="node"><svg class="arrow"><use href="#i-down"/></svg><svg class="icon small"><use href="#i-node"/></svg>datajson</span></td><td>0..1</td><td></td></tr>
                                <tr class="twig"><td><span class="node"><svg class="icon small"><use href="#i-node"/></svg>message</span></td><td>0..1</td><td>xsd:string</td></tr>
                                <tr class="twig"><td><span class="node"><svg class="icon small"><use href="#i-node-red"/></svg>dataIds</span></td><td>0..unbounded</td><td>xsd:string</td></tr>
                                <tr class="twig"><td><span class="node"><svg class="icon small"><use href="#i-node"/></svg>status</span></td><td>0..1</td><td>xsd:string</td></tr>
                            </tbody>
                        </table>
                    </div>
                    <div class="hscroll">
                        <button class="scroll-btn" aria-label="Scroll left"><svg class="arrow"><use href="#i-left"/></svg></button>
                        <button class="scroll-btn" aria-label="Scroll right"><svg class="arrow"><use href="#i-right"/></svg></button>
                        <div class="track"><div class="thumb"></div><div class="track-after"></div></div>
                        <button class="scroll-btn" aria-label="Scroll left"><svg class="arrow"><use href="#i-left"/></svg></button>
                        <button class="scroll-btn" aria-label="Scroll right"><svg class="arrow"><use href="#i-right"/></svg></button>
                    </div>
                </section>

                <div class="vsplit inner">
                    <svg class="split-arrows" viewBox="0 0 10 46"><path d="M9 2v18L1 11z" fill="#5f8ab0"/><path d="M9 2L1 11" stroke="#111"/><path d="M1 28v18l8-9z" fill="#5f8ab0"/><path d="M1 28v18" stroke="#111"/></svg>
                    <span class="dots"></span>
                </div>

                <section class="pane">
                    <div class="pane-head">
                        <svg class="icon"><use href="#i-mtype"/></svg>
                        <span>Message Type: MT_SRM_Return_RES</span>
                        <button class="tool drop" aria-label="Window"><svg class="icon"><use href="#i-windows"/></svg></button>
                    </div>
                    <div class="toolbar pane-toolbar">
                        <button class="tool" aria-label="Tree"><svg class="icon"><use href="#i-tree"/></svg></button>
                        <button class="tool pressed" aria-label="Table"><svg class="icon"><use href="#i-grid"/></svg></button>
                        <button class="tool" aria-label="Source"><svg class="icon" viewBox="0 0 24 24"><path d="M5 1h11l4 4v17H5z" fill="#dceaf5" stroke="#222" stroke-width="1.500"/><path d="M0 8h24v9H0z" fill="#fff"/><text x="12" y="16" text-anchor="middle" class="icon-text">SRC</text></svg></button>
                        <span class="sep"></span>
                        <button class="tool" aria-label="Expand all"><svg class="icon"><use href="#i-expand"/></svg></button>
                        <span class="sep"></span>
                        <button class="tool" aria-label="Attributes"><svg class="icon" viewBox="0 0 24 24"><path d="M4 2H2v8h2M8 2h2v8H8" fill="none" stroke="#222" stroke-width="1.5"/><path d="M14 7h8M2 17h7" stroke="#222" stroke-width="2" stroke-dasharray="2 1"/><text x="17" y="21" text-anchor="middle" class="icon-at">@</text></svg></button>
                        <button class="tool drop" aria-label="Filter tree"><svg class="icon"><use href="#i-treefilter"/></svg></button>
                        <button class="tool" aria-label="Text preview"><svg class="icon"><use href="#i-docview"/></svg></button>
                        <button class="tool drop" aria-label="Filter fields"><svg class="icon"><use href="#i-fieldfilter"/></svg></button>
                        <span class="sep"></span>
                        <button class="tool" aria-label="Find"><svg class="icon"><use href="#i-binoc"/></svg></button>
                        <button class="tool" aria-label="Export"><svg class="icon"><use href="#i-export"/></svg></button>
                    </div>
                    <div class="table-box">
                        <table class="structure">
                            <colgroup><col class="col-structure"><col class="col-occurs"><col></colgroup>
                            <thead>
                                <tr><th>Structure</th><th>Occurrences</th><th>Type</th></tr>
                            </thead>
                            <tbody>
                                <tr class="root"><td><span class="node"><svg class="arrow"><use href="#i-down"/></svg><svg class="icon small"><use href="#i-node-green"/></svg>MT_SRM_Return_RES</span></td><td>1..1</td><td>p4:DT_SRM_Return_RES</td></tr>
                                <tr class="branch"><td><span class="node"><svg class="arrow"><use href="#i-down"/></svg><svg class="icon small"><use href="#i-node"/></svg>datajson</span></td><td>0..1</td><td></td></tr>
                                <tr class="twig"><td><span class="node"><svg class="icon small"><use href="#i-node"/></svg>message</span></td><td>0..1</td><td>xsd:string</td></tr>
                                <tr class="twig"><td><span class="node"><svg class="icon small"><use href="#i-node-red"/></svg>dataIds</span></td><td>0..unbounded</td><td>xsd:string</td></tr>
                                <tr class="twig"><td><span class="node"><svg class="icon small"><use href="#i-node"/></svg>status</span></td><td>0..1</td><td>xsd:string</td></tr>
                            </tbody>
                        </table>
                    </div>
                    <div class="hscroll">
                        <button class="scroll-btn" aria-label="Scroll left"><svg class="arrow"><use href="#i-left"/></svg></button>
                        <button class="scroll-btn" aria-label="Scroll right"><svg class="arrow"><use href="#i-right"/></svg></button>
                        <div class="track"><div class="thumb"></div><div class="track-after"></div></div>
                        <button class="scroll-btn" aria-label="Scroll left"><svg class="arrow"><use href="#i-left"/></svg></button>
                        <button class="scroll-btn" aria-label="Scroll right"><svg class="arrow"><use href="#i-right"/></svg></button>
                    </div>
                </section>
            </div>

            <div class="hsplit">
                <svg class="split-arrows flat" viewBox="0 0 46 10"><path d="M5 9h16L13 1z" fill="#5f8ab0"/><path d="M5 9l8-8" stroke="#111"/><path d="M30 1h16l-8 8z" fill="#5f8ab0"/><path d="M30 1h16" stroke="#111"/></svg>
                <span class="dots flat"></span>
            </div>

            <div class="flow">
                <div class="vsplit flow-split">
                    <svg class="split-arrows" viewBox="0 0 10 46"><path d="M9 2v18L1 11z" fill="#5f8ab0"/><path d="M9 2L1 11" stroke="#111"/><path d="M1 28v18l8-9z" fill="#5f8ab0"/><path d="M1 28v18" stroke="#111"/></svg>
                    <span class="dots"></span>
                </div>
                <div class="flow-body">
                    <div class="flow-top">
                        <div class="flow-tools">
                            <button class="tool" aria-label="Show dependencies"><svg class="icon"><use href="#i-winfilter"/></svg></button>
                            <button class="tool" aria-label="Erase"><svg class="icon"><use href="#i-erase"/></svg></button>
                            <button class="tool" aria-label="Insert"><svg class="icon"><use href="#i-insert"/></svg></button>
                            <button class="tool" aria-label="Paste"><svg class="icon"><use href="#i-paste"/></svg></button>
                        </div>
                        <div class="canvas"></div>
                    </div>
                    <div class="functions">
                        <button class="tool" aria-label="Create function"><svg class="icon"><use href="#i-new"/></svg></button>
                        <label for="category">Functions:</label>
                        <span class="select-box category">
                            <select id="category"><option>Text</option></select>
                            <svg class="list-icon"><use href="#i-list"/></svg>
                        </span>
                        <div class="function-list">
                            <button class="fn"><svg class="cog"><use href="#i-cog"/></svg>substring</button>
                            <button class="fn"><svg class="cog"><use href="#i-cog"/></svg>concat</button>
                            <button class="fn">equalsS</button>
                            <button class="fn">indexOf</button>
                            <button class="fn">indexOf</button>
                            <button class="fn">lastIndexOf</button>
                            <button class="fn">lastIndexOf</button>
                            <button class="fn">compare</button>
                            <button class="fn">replaceString</button>
                            <button class="fn">length</button>
                        </div>
                        <button class="page-btn off" aria-label="Previous functions"><svg><use href="#i-left"/></svg></button>
                        <button class="page-btn" aria-label="Next functions"><svg><use href="#i-right"/></svg></button>
                    </div>
                </div>
            </div>

            <div class="hsplit">
                <svg class="split-arrows flat" viewBox="0 0 46 10"><path d="M2 9h16L10 1z" fill="#5f8ab0"/><path d="M2 9l8-8" stroke="#111"/><path d="M28 1h16l-8 8z" fill="#5f8ab0"/><path d="M28 1h16" stroke="#111"/></svg>
                <span class="dots flat"></span>
            </div>

            <div class="open-objects">
                <svg class="stack" viewBox="0 0 50 32"><path d="M0 0h14l20 26h-8z" fill="#7ba5d5"/><path d="M0 0h6l20 20h-8z" fill="#6b98c8"/><path d="M14 0h36v32H38z" fill="#83abd9"/></svg>
                <button class="object-tab first"><svg class="icon"><use href="#i-map"/></svg>MM_MaterialCheck_REQ</button>
                <button class="object-tab"><svg class="icon"><use href="#i-iface"/></svg>SI_OA_MaterialCheck_IN</button>
                <button class="object-tab"><svg class="icon"><use href="#i-map"/></svg>MM_Return_REQ</button>
                <button class="object-tab active"><svg class="icon"><use href="#i-map"/></svg>MM_Return_RES</button>
                <div class="object-nav">
                    <button aria-label="Previous object"><svg class="arrow"><use href="#i-left"/></svg></button>
                    <button class="off" aria-label="Next object"><svg class="arrow"><use href="#i-right"/></svg></button>
                    <button aria-label="Object list"><svg class="icon small"><use href="#i-menu"/></svg></button>
                </div>
            </div>
        </main>
    </div>

    <footer class="taskbar">
        <span class="task"></span>
        <time class="clock">10:51</time>
    </footer>

    <!-- Red pen marks over the screen -->
    <svg class="marks" aria-hidden="true">
        <g class="pen">
            <path d="M1021 165L1011 187H1033M1025 174L1016 204"/>
            <path d="M797 434H811Q818 436 813 443L797 457H824L825 461 815 466"/>
            <path d="M766 523L765 544"/>
            <path d="M790 532Q800 526 811 528L841 522Q880 516 921 513T1003 510H1190Q1205 514 1220 514L1241 520"/>
            <path d="M1242 505L1256 506Q1270 510 1278 518L1293 524Q1280 532 1262 536L1232 541"/>
            <path d="M1422 523Q1426 508 1441 508 1450 510 1446 520L1438 537 1424 546 1440 545 1458 542H1490"/>
        </g>
        <g class="pen-head">
            <path d="M754 432L776 434 772 437 785 446 766 442 762 448z"/>
            <path d="M717 562L723 549 728 552 752 546 735 557 737 561z"/>
            <path d="M1336 561L1346 549 1349 553 1407 544 1351 557 1354 562z"/>
        </g>
    </svg>
</body>
</html>
```
FILE: styles.css
```css
* {
    box-sizing: border-box;
}
body {
    margin: 0;
    height: 100vh;
    display: flex;
    flex-direction: column;
    overflow: hidden;
    font-family: "Liberation Sans", Arial, sans-serif;
    font-size: 18px;
    line-height: 20px;
    color: #111;
    background-color: #f2f3f8;
}
button, input, select {
    font: inherit;
    color: inherit;
    margin: 0;
    padding: 0;
    border-radius: 0;
}
button {
    border: none;
    background: none;
    white-space: nowrap;
}
.sprite {
    position: absolute;
    width: 0;
    height: 0;
}
.icon {
    width: 25px;
    height: 25px;
    flex: none;
    display: block;
}
.icon.small {
    width: 20px;
    height: 22px;
}
.icon-text {
    font: bold 9px "Liberation Sans", sans-serif;
    fill: #12206c;
}
.icon-at {
    font: 14px "Liberation Sans", sans-serif;
}
.arrow {
    width: 12px;
    height: 12px;
    flex: none;
    color: #33384e;
}

/* Title bar */
.titlebar {
    height: 35px;
    flex: none;
    display: flex;
    align-items: flex-start;
    padding-left: 11px;
    background-color: #fff;
}
.titlebar-text {
    flex: 1;
    padding-left: 5px;
    font-family: "Open Sans", "Noto Sans", sans-serif;
    font-size: 18px;
    line-height: 22px;
    color: #000;
}
.win-btn {
    width: 70px;
    height: 24px;
    display: flex;
    justify-content: center;
    align-items: center;
}
.win-btn svg {
    width: 16px;
    height: 16px;
    fill: none;
    stroke: #000;
}

/* Menus */
.menubar {
    height: 41px;
    flex: none;
    display: flex;
    align-items: center;
    gap: 21px;
    padding: 0 0 2px 15px;
    background-color: #e0e7ee;
    border-top: 1px solid #b4b8bc;
    border-bottom: 4px solid #fa9a0c;
    box-shadow: inset 9px 0 #0c3c63;
    padding-left: 24px;
}
.menubar a, .editor-menu a {
    color: #22568f;
    text-decoration: none;
}
u {
    text-underline-offset: 3px;
}

/* Toolbars */
.toolbar {
    display: flex;
    align-items: center;
    gap: 1px;
}
.tool {
    width: 32px;
    height: 33px;
    flex: none;
    display: flex;
    align-items: center;
    justify-content: center;
    background-color: #f1dfae;
    border: 2px solid;
    border-color: #8e8a78 #6a675c #6a675c #8e8a78;
    border-bottom-width: 3px;
    box-shadow: inset 1px 1px #fdf4d4;
}
.tool.pressed {
    background-color: #faecc8;
    border-color: #7fa3c6 #fbf6dc #8fb0d0 #7fa3c6;
    border-bottom-width: 2px;
}
.tool.drop {
    width: 45px;
    justify-content: flex-start;
    padding-left: 2px;
}
.tool.drop::after {
    content: "";
    height: 24px;
    margin-left: 3px;
    border-left: 2px solid #77736a;
}
.tool.drop::before {
    content: "";
    order: 3;
    margin-left: 1px;
    border: 4px solid transparent;
    border-top: 5px solid #000;
    border-bottom: 0;
}
.tool.plain::after {
    border-color: transparent;
}
.sep {
    width: 2px;
    height: 19px;
    margin: 0 6px 0 7px;
    background-color: #97a3b3;
}
.main-toolbar {
    height: 42px;
    flex: none;
    padding-left: 6px;
    background-color: #a2bfe4;
    border-left: 9px solid #0c3c63;
    border-bottom: 2px solid #5a6670;
    box-shadow: inset 0 -2px #dfe6ee;
}

/* Workspace */
.workspace {
    flex: 1;
    min-height: 0;
    display: flex;
}
.sidebar {
    width: 655px;
    flex: none;
    display: flex;
    flex-direction: column;
    border-left: 2px solid #5c87ae;
    border-right: 3px solid #5c87ae;
    background-color: #cbdbea;
}
.tabs {
    flex: none;
    display: flex;
    align-items: stretch;
    background-color: #f2f3f8;
    border-bottom: 3px solid #4a79a6;
}
.tab {
    display: flex;
    align-items: center;
    gap: 10px;
    padding: 0 18px 0 17px;
    border-left: 4px solid #6593c0;
    background-color: #83abd9;
    clip-path: polygon(18px 0, 100% 0, 100% 100%, 0 100%, 0 65%);
}
.tab.active {
    padding-left: 37px;
    border-left: none;
    background-color: #255b8e;
    color: #fff;
    clip-path: polygon(32px 0, 100% 0, 100% 100%, 0 100%);
}
.side-tabs {
    height: 35px;
    margin: 0 -3px 0 -2px;
    padding-left: 7px;
}
.side-tabs .tab {
    padding-right: 21px;
}
.side-toolbar {
    flex: none;
    height: 35px;
}
.side-toolbar label {
    padding-bottom: 1px;
}
.find {
    flex: 1;
    min-width: 0;
    height: 33px;
    margin-left: 2px;
    border: 2px solid #9a9a98;
    background-color: #fff;
}
.tree-box {
    flex: 1;
    min-height: 0;
    display: flex;
    border-top: 2px solid #6b95bd;
    border-bottom: 2px solid #4a79a6;
    background-color: #f2f3f8;
}
.tree {
    flex: 1;
    margin: 0;
    padding: 4px 0 0;
    list-style: none;
    overflow: hidden;
}
.tree li {
    display: flex;
    align-items: center;
    height: 27px;
    padding-bottom: 3px;
    white-space: nowrap;
}
.tree .leaf {
    padding-left: 151px;
}
.tree .leaf .icon {
    margin-right: 5px;
}
.tree .group {
    height: 32px;
    padding: 0 0 5px 97px;
    background-color: #e3e8ef;
    border-top: 1px solid #fbfcfd;
    border-bottom: 1px solid #cfdeec;
}
.tree .group.short {
    height: 27px;
    padding-bottom: 3px;
}
.group .icon {
    margin: 0 5px 0 12px;
}
.tree .ns {
    height: 31px;
    padding: 0 0 4px 68px;
    background-color: #d7dde8;
}
.tree .ns.short {
    height: 28px;
    gap: 12px;
}
.ns .icon {
    margin: 4px 4px 0 14px;
}
.ns span {
    height: 31px;
    margin-bottom: -4px;
    padding: 0 5px 0 3px;
    line-height: 27px;
}
.ns .selected {
    background-color: #ffcb32;
    color: #1a12d8;
}
.tree .sc {
    height: 31px;
    padding: 0 0 6px 9px;
    background-color: #cbdcea;
}
.sc .icon {
    margin: 2px 7px 0 9px;
}

/* Scroll bars */
.vscroll {
    width: 28px;
    display: flex;
    flex-direction: column;
    align-items: center;
    gap: 5px;
    padding: 2px 0;
}
.scroll-btn {
    width: 22px;
    height: 22px;
    flex: none;
    display: flex;
    align-items: center;
    justify-content: center;
    background-color: #fff;
    border: 2px solid #4a79a6;
}
.track {
    flex: 1;
    display: flex;
    border: 2px solid #4a79a6;
    background-color: #96b1c3;
}
.vscroll .track {
    width: 22px;
    flex-direction: column;
}
.track .thumb {
    background-color: #fff;
}
.vscroll .track-before {
    flex: 525;
    border-bottom: 2px solid #4a79a6;
}
.vscroll .thumb {
    flex: 287;
}
.vscroll .track-after {
    flex: 22;
    border-top: 2px solid #4a79a6;
}
.hscroll {
    height: 25px;
    flex: none;
    display: flex;
    gap: 5px;
    padding: 0 2px 3px;
}
.hscroll .thumb {
    flex: 77;
}
.hscroll .track-after {
    flex: 23;
    border-left: 2px solid #4a79a6;
}

/* Split bars */
.vsplit {
    width: 11px;
    flex: none;
    display: flex;
    flex-direction: column;
    align-items: center;
    justify-content: space-between;
    background-color: #dfe5ed;
    border-left: 1px solid #fff;
}
.split-arrows {
    width: 10px;
    height: 46px;
    flex: none;
    fill: none;
}
.split-arrows.flat {
    width: 46px;
    height: 10px;
}
.dots {
    width: 4px;
    height: 28px;
    background: repeating-linear-gradient(#6c93b8 0 3px, transparent 3px 6px);
}
.dots.flat {
    width: 28px;
    height: 4px;
    background: repeating-linear-gradient(90deg, #6c93b8 0 3px, transparent 3px 6px);
}
.vsplit::after {
    content: "";
    height: 46px;
}
.hsplit {
    height: 15px;
    flex: none;
    display: flex;
    align-items: center;
    justify-content: space-between;
    background-color: #dfe5ed;
    border-top: 1px solid #fff;
    border-bottom: 3px solid #5f8ab0;
}
.hsplit::after {
    content: "";
    width: 46px;
}

/* Editor */
.editor {
    flex: 1;
    min-width: 0;
    display: flex;
    flex-direction: column;
    border-left: 6px solid #5f8ab0;
    border-right: 5px solid #5f8ab0;
}
.editor-head {
    height: 52px;
    flex: none;
    display: flex;
    align-items: center;
    background-color: #a2bfe4;
    border-top: 2px solid #2f6394;
    border-bottom: 2px solid #56636e;
    box-shadow: inset 0 -2px #dfe6ee;
}
.editor-menu {
    display: flex;
    gap: 21px;
    padding: 0 20px 0 36px;
}
.head-right {
    margin-left: auto;
}
.object-form {
    flex: none;
    height: 195px;
    padding: 7px 7px 0 6px;
}
.form-title {
    display: flex;
    align-items: center;
    gap: 18px;
    height: 33px;
}
.form-title .icon {
    margin-right: -14px;
}
.form-title h1 {
    flex: 1;
    margin: 0;
    font-size: 18px;
    line-height: 20px;
}
.language-label {
    width: 171px;
}
.field {
    height: 30px;
    padding: 0 2px;
    border: 2px solid #a3a5a6;
    background-color: #d9e5f2;
}
.field.editing {
    background: linear-gradient(#222, #222) 1px 0 / 2px 100% no-repeat #ffee9c;
}
.status {
    width: 150px;
    height: 33px;
}
.select-box {
    display: grid;
    align-items: center;
    justify-items: end;
}
.select-box select {
    grid-area: 1 / 1;
    width: 100%;
    height: 100%;
    padding-left: 2px;
    appearance: none;
    background-color: #fff;
    border: 2px solid #a3a5a6;
}
.list-icon {
    grid-area: 1 / 1;
    width: 14px;
    height: 19px;
    margin-right: 4px;
    pointer-events: none;
}
.language {
    width: 129px;
    height: 33px;
}
.form-grid {
    display: grid;
    grid-template-columns: 260px 1fr;
    align-items: center;
    row-gap: 5px;
    padding-top: 4px;
}
.editor-tabs {
    height: 37px;
    padding-left: 6px;
    border-bottom-color: #5484b0;
}
.definition-toolbar {
    height: 38px;
    flex: none;
    padding: 0 3px 2px;
    border-bottom: 2px solid #8aa9c6;
}

/* Structure panes */
.panes {
    flex: 385;
    min-height: 0;
    display: flex;
}
.pane {
    flex: 1;
    min-width: 0;
    display: flex;
    flex-direction: column;
}
.pane-head {
    height: 50px;
    flex: none;
    display: flex;
    align-items: center;
    gap: 5px;
    padding: 0 0 2px 8px;
    background-color: #cbdbea;
    border-bottom: 2px solid #7f9fbe;
}
.pane-head .tool {
    margin-left: auto;
}
.pane-toolbar {
    height: 38px;
    flex: none;
    padding-left: 3px;
    background-color: #cbdbea;
    border-bottom: 2px solid #7f9fbe;
}
.pane-toolbar .sep {
    margin: 0 6px;
}
.inner {
    width: 12px;
    border-right: 2px solid #7f9fbe;
}
.table-box {
    flex: 1;
    min-height: 0;
    overflow: hidden;
}
.structure {
    width: 100%;
    table-layout: fixed;
    border-collapse: collapse;
}
.col-structure {
    width: 271px;
}
.col-occurs {
    width: 120px;
}
.structure th {
    height: 31px;
    padding: 1px 3px 0;
    text-align: left;
    font-weight: normal;
    background-color: #f1dfae;
    border-right: 2px solid #6a96c0;
    border-bottom: 2px solid #6a96c0;
}
.structure td {
    height: 27px;
    padding: 0 1px;
    white-space: nowrap;
    border-right: 2px solid #b4b7ba;
    border-bottom: 2px solid #b4b7ba;
}
.structure td:last-child {
    background-color: #d9e5f2;
}
.node {
    display: flex;
    align-items: center;
    padding-left: 5px;
}
.node .icon {
    margin-right: 2px;
}
.node .arrow {
    margin-right: 14px;
}
.root td:first-child {
    background-color: #d7dde8;
}
.branch td:first-child {
    background-color: #e3e8ef;
}
.branch .node {
    padding-left: 35px;
}
.twig .node {
    padding-left: 91px;
}

/* Data flow editor */
.flow {
    flex: 253;
    min-height: 0;
    display: flex;
    border-bottom: 3px solid #5f8ab0;
}
.flow-split {
    width: 12px;
    border-right: 1px solid #5f8ab0;
}
.flow-body {
    flex: 1;
    min-width: 0;
    display: flex;
    flex-direction: column;
}
.flow-top {
    flex: 1;
    min-height: 0;
    display: flex;
    border-bottom: 2px solid #7fa0c0;
}
.flow-tools {
    padding: 1px 4px 0 3px;
    border-right: 1px solid #5f8ab0;
}
.canvas {
    flex: 1;
}
.functions {
    height: 39px;
    flex: none;
    display: flex;
    align-items: center;
    padding: 2px 0 0 5px;
}
.functions label {
    padding: 0 2px 4px 8px;
}
.category {
    width: 153px;
    height: 30px;
    margin-bottom: 4px;
}
.function-list {
    flex: 1;
    display: flex;
    gap: 3px;
    padding-left: 3px;
    overflow: hidden;
}
.fn {
    height: 36px;
    flex: none;
    display: flex;
    align-items: center;
    gap: 6px;
    padding: 0 3px;
    background-color: #f1dfae;
    border: 2px solid;
    border-color: #8e8a78 #6a675c #6a675c #8e8a78;
    border-bottom-width: 3px;
}
.cog {
    width: 15px;
    height: 18px;
}
.page-btn {
    width: 22px;
    height: 29px;
    flex: none;
    display: flex;
    align-items: center;
    justify-content: center;
    background-color: #f1dfae;
    border: 2px solid #8e8a78;
    border-bottom-width: 3px;
    color: #000;
}
.page-btn svg {
    width: 18px;
    height: 20px;
    flex: none;
}
.page-btn.off {
    color: #85827a;
}

/* Open object tabs */
.open-objects {
    height: 32px;
    flex: none;
    display: flex;
    background-color: #f2f3f8;
}
.stack {
    width: 50px;
    height: 32px;
    flex: none;
}
.object-tab {
    display: flex;
    align-items: center;
    gap: 6px;
    padding: 0 16px 0 14px;
    border-left: 4px solid #6593c0;
    background-color: #83abd9;
    clip-path: polygon(0 0, 100% 0, 100% 100%, 18px 100%, 0 50%);
}
.object-tab.first {
    padding-left: 2px;
    border-left: none;
    clip-path: none;
}
.object-tab.active {
    margin-left: -16px;
    padding-left: 36px;
    border-left: none;
    background-color: #255b8e;
    color: #fff;
    clip-path: polygon(0 0, 100% 0, 100% 100%, 32px 100%);
}
.object-nav {
    display: flex;
    gap: 7px;
    margin-left: auto;
    padding-top: 3px;
}
.object-nav button {
    width: 23px;
    height: 23px;
    display: flex;
    align-items: center;
    justify-content: center;
    background-color: #f1dfae;
    border: 2px solid #8a9ea8;
}
.object-nav .off {
    background-color: #e3e8ef;
    border-color: #b4b8c0;
}
.object-nav .off .arrow {
    color: #9a9da4;
}

/* Taskbar */
.taskbar {
    height: 12px;
    flex: none;
    display: flex;
    overflow: hidden;
    background-color: #232f37;
    color: #fff;
}
.task {
    width: 73px;
    margin-left: 749px;
    background-color: #4d585f;
}
.clock {
    margin: 4px 121px 0 auto;
}

/* Pen marks */
.marks {
    position: absolute;
    top: 0;
    left: 0;
    width: 100%;
    height: 100%;
    pointer-events: none;
}
.pen {
    fill: none;
    stroke: #f24b3c;
    stroke-width: 4px;
    stroke-linecap: round;
    stroke-linejoin: round;
}
.pen-head {
    fill: #f24b3c;
}
```
